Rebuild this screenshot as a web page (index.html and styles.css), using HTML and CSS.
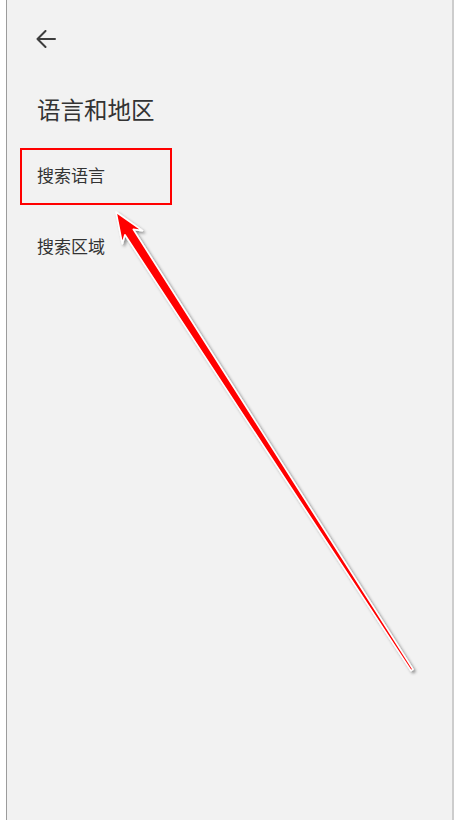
FILE: index.html
```html
<!DOCTYPE html>
<html lang="zh-CN">
<head>
<meta charset="utf-8">
<title>语言和地区</title>
<link rel="stylesheet" href="styles.css">
</head>
<body>
<div class="screen">
  <header class="top-bar">
    <button class="back-btn" type="button" aria-label="返回">
      <svg class="back-icon" viewBox="0 0 20 18" width="20" height="18">
        <path d="M1.5 9 H19 M9.5 1 L1.5 9 L9.5 17" fill="none" stroke="#3d3d3d" stroke-width="2" stroke-linecap="round" stroke-linejoin="round"/>
      </svg>
    </button>
  </header>

  <h1 class="page-title">语言和地区</h1>

  <ul class="settings-list">
    <li class="settings-item">搜索语言</li>
    <li class="settings-item">搜索区域</li>
  </ul>

  <div class="highlight-box"></div>
</div>

<svg class="callout-arrow" viewBox="0 0 458 820" width="458" height="820">
  <defs>
    <filter id="arrow-shadow" x="-10%" y="-10%" width="130%" height="130%">
      <feDropShadow dx="2" dy="2" stdDeviation="1.8" flood-color="#000" flood-opacity="0.45"/>
    </filter>
  </defs>
  <polygon points="116,212 142.4,230.6 133.3,229.4 413,669.4 411,670.6 124.9,234.8 122.3,243.7"
           fill="#ff0000" stroke="#ffffff" stroke-width="1.6" stroke-linejoin="round" filter="url(#arrow-shadow)"/>
</svg>
</body>
</html>
```

FILE: styles.css
```css
html, body {
  margin: 0;
  padding: 0;
  background: #ffffff;
}

body {
  font-family: "Noto Sans CJK SC", "Noto Sans", sans-serif;
  color: #333333;
  position: relative;
  width: 458px;
  height: 820px;
  overflow: hidden;
}

.screen {
  position: relative;
  box-sizing: border-box;
  margin-left: 6px;
  width: 448px;
  height: 820px;
  background: #f2f2f2;
  border-left: 1px solid #9c9c9c;
  border-right: 2px solid #cdcdcd;
  padding: 30px 0 0 29px;
}

.top-bar {
  display: flex;
  align-items: center;
  height: 18px;
}

.back-btn {
  display: flex;
  padding: 0;
  margin: 0;
  border: 0;
  background: none;
}

.back-icon {
  display: block;
}

.page-title {
  margin: 49px 0 0 1px;
  font-size: 23.5px;
  line-height: 24px;
  font-weight: 400;
  color: #333333;
}

.settings-list {
  list-style: none;
  margin: 18px 0 0 1px;
  padding: 0;
}

.settings-item {
  display: flex;
  align-items: center;
  height: 71px;
  font-size: 17px;
  line-height: 20px;
  color: #333333;
}

.highlight-box {
  position: absolute;
  left: 13px;
  top: 148px;
  width: 152px;
  height: 57px;
  box-sizing: border-box;
  border: 2px solid #ff0000;
}

.callout-arrow {
  position: absolute;
  left: 0;
  top: 0;
  pointer-events: none;
}
```
